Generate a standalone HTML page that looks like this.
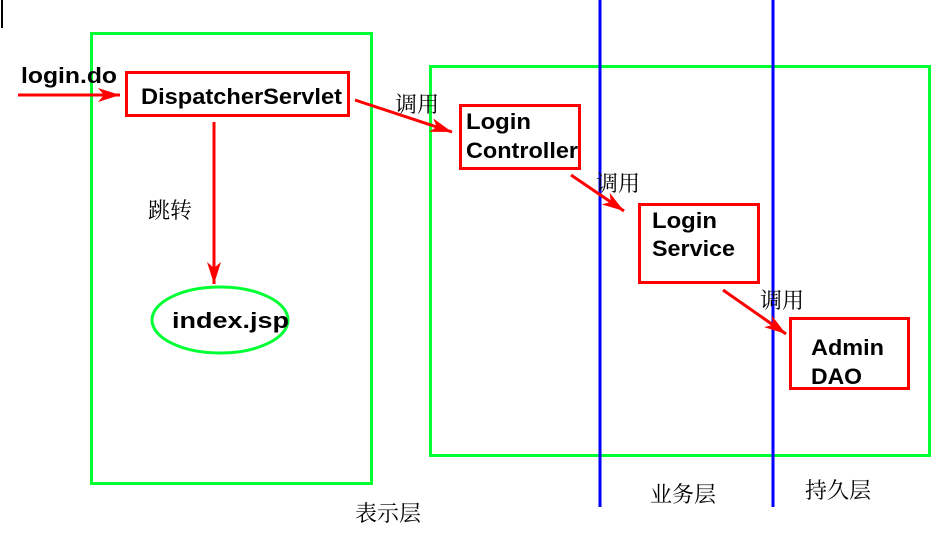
<!DOCTYPE html>
<html><head><meta charset="utf-8"><style>
html,body{margin:0;padding:0;background:#fff;width:948px;height:544px;overflow:hidden}
svg{display:block}
.t{font-family:"Liberation Sans",sans-serif;font-weight:bold;font-size:22px;fill:#000}
.c{font-family:"Liberation Serif","Noto Serif CJK SC",serif;font-size:22px;fill:#000}
</style></head><body>
<svg width="948" height="544" viewBox="0 0 948 544">
<defs>
<marker id="b" markerWidth="22" markerHeight="14" refX="22" refY="7" orient="auto" markerUnits="userSpaceOnUse" viewBox="0 0 22 14"><path d="M0,0 L22,7 L0,14 L6,7 Z" fill="#f00"/></marker></defs>
<line x1="2" y1="0" x2="2" y2="28" stroke="#000" stroke-width="2"/>
<rect x="91.5" y="33.5" width="280" height="450" fill="none" stroke="#00ff33" stroke-width="3"/>
<rect x="430.5" y="66.5" width="499" height="389" fill="none" stroke="#00ff33" stroke-width="3"/>
<line x1="600" y1="0" x2="600" y2="507" stroke="#0000ff" stroke-width="3"/>
<line x1="773" y1="0" x2="773" y2="507" stroke="#0000ff" stroke-width="3"/>
<rect x="126.5" y="72.5" width="222" height="43" fill="none" stroke="#f00" stroke-width="3"/>
<text class="t" x="141" y="104" textLength="201" lengthAdjust="spacingAndGlyphs">DispatcherServlet</text>
<text class="t" x="21" y="83" textLength="96" lengthAdjust="spacingAndGlyphs">login.do</text>
<line x1="18" y1="95" x2="120" y2="95" stroke="#f00" stroke-width="3" marker-end="url(#b)"/>
<line x1="214" y1="122" x2="214" y2="284" stroke="#f00" stroke-width="3" marker-end="url(#b)"/>
<text class="c" x="148" y="218">跳转</text>
<ellipse cx="220" cy="320" rx="68" ry="33" fill="none" stroke="#00ff33" stroke-width="3"/>
<text class="t" x="172" y="328" textLength="117" lengthAdjust="spacingAndGlyphs">index.jsp</text>
<line x1="355" y1="100" x2="452" y2="132" stroke="#f00" stroke-width="3" marker-end="url(#b)"/>
<text class="c" x="395" y="112">调用</text>
<rect x="460.5" y="105.5" width="119" height="63" fill="none" stroke="#f00" stroke-width="3"/>
<text class="t" x="466" y="129" textLength="65" lengthAdjust="spacingAndGlyphs">Login</text><text class="t" x="466" y="158" textLength="112" lengthAdjust="spacingAndGlyphs">Controller</text>
<line x1="571" y1="175" x2="624" y2="211" stroke="#f00" stroke-width="3" marker-end="url(#b)"/>
<text class="c" x="596" y="191">调用</text>
<rect x="639.5" y="204.5" width="119" height="78" fill="none" stroke="#f00" stroke-width="3"/>
<text class="t" x="652" y="228" textLength="65" lengthAdjust="spacingAndGlyphs">Login</text><text class="t" x="652" y="256" textLength="83" lengthAdjust="spacingAndGlyphs">Service</text>
<line x1="723" y1="290" x2="786" y2="334" stroke="#f00" stroke-width="3" marker-end="url(#b)"/>
<text class="c" x="760" y="308">调用</text>
<rect x="790.5" y="318.5" width="118" height="70" fill="none" stroke="#f00" stroke-width="3"/>
<text class="t" x="811" y="355" textLength="73" lengthAdjust="spacingAndGlyphs">Admin</text><text class="t" x="811" y="384" textLength="51" lengthAdjust="spacingAndGlyphs">DAO</text>
<text class="c" x="355" y="521">表示层</text>
<text class="c" x="650" y="502">业务层</text>
<text class="c" x="805" y="498">持久层</text>
</svg>
</body></html>
